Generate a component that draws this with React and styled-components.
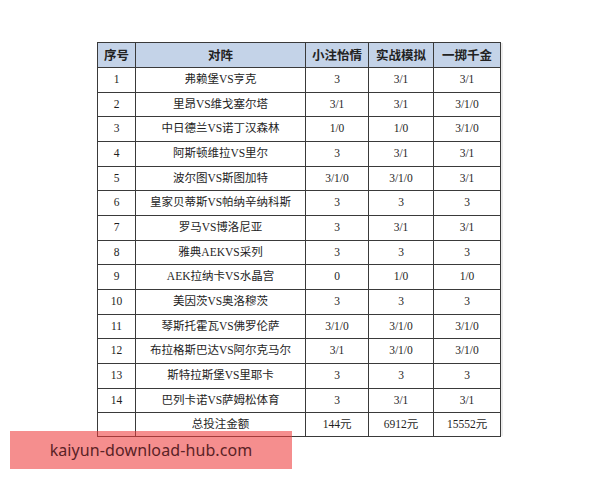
import React from "react";
import styled, { createGlobalStyle } from "styled-components";

const Global = createGlobalStyle`
  html, body { margin: 0; padding: 0; background: #ffffff; }
  body { font-family: "Liberation Serif", "Noto Sans CJK SC", serif; }
`;

const Page = styled.div`
  position: relative;
  width: 600px;
  height: 480px;
  padding: 42px 0 0 97px;
  box-sizing: border-box;
  background: #fff;
`;

const Table = styled.table`
  border-collapse: collapse;
  table-layout: fixed;
  width: 403px;
  color: #1e1e1e;
  font-family: "Liberation Serif", "Noto Sans CJK SC", serif;
  box-shadow: 3px 0 0 -1px #ececec;
`;

const Col = styled.col`
  width: ${(p) => p.$w}px;
`;

const HeadRow = styled.tr`
  height: 25px;
  background: #c4d3e8;
`;

const HeadCell = styled.th`
  border: 1px solid #3a3a3a;
  padding: 0;
  font-family: "Noto Sans CJK SC", sans-serif;
  font-weight: 700;
  font-size: 12.5px;
  color: #222;
  text-align: center;
  vertical-align: middle;
  line-height: 1;
`;

const Row = styled.tr`
  height: ${(p) => p.$h}px;
`;

const Cell = styled.td`
  border: 1px solid #3a3a3a;
  padding: 0;
  font-size: 11.5px;
  text-align: center;
  vertical-align: middle;
  line-height: 1;
  white-space: nowrap;
`;

const Banner = styled.div`
  position: absolute;
  left: 10px;
  top: 431px;
  width: 282px;
  height: 38px;
  background: rgba(238, 60, 60, 0.58);
  display: flex;
  align-items: center;
  justify-content: center;
  font-family: "Noto Sans", "Open Sans", sans-serif;
  font-size: 16px;
  color: #5a2226;
  letter-spacing: 0.1px;
`;

const rows = [
  ["1", "弗赖堡VS亨克", "3", "3/1", "3/1"],
  ["2", "里昂VS维戈塞尔塔", "3/1", "3/1", "3/1/0"],
  ["3", "中日德兰VS诺丁汉森林", "1/0", "1/0", "3/1/0"],
  ["4", "阿斯顿维拉VS里尔", "3", "3/1", "3/1"],
  ["5", "波尔图VS斯图加特", "3/1/0", "3/1/0", "3/1"],
  ["6", "皇家贝蒂斯VS帕纳辛纳科斯", "3", "3", "3"],
  ["7", "罗马VS博洛尼亚", "3", "3/1", "3/1"],
  ["8", "雅典AEKVS采列", "3", "3", "3"],
  ["9", "AEK拉纳卡VS水晶宫", "0", "1/0", "1/0"],
  ["10", "美因茨VS奥洛穆茨", "3", "3", "3"],
  ["11", "琴斯托霍瓦VS佛罗伦萨", "3/1/0", "3/1/0", "3/1/0"],
  ["12", "布拉格斯巴达VS阿尔克马尔", "3/1", "3/1/0", "3/1/0"],
  ["13", "斯特拉斯堡VS里耶卡", "3", "3", "3"],
  ["14", "巴列卡诺VS萨姆松体育", "3", "3/1", "3/1"],
  ["", "总投注金额", "144元", "6912元", "15552元"],
];

export default function App() {
  return (
    <>
      <Global />
      <Page>
        <Table>
          <colgroup>
            <Col $w={38} />
            <Col $w={170} />
            <Col $w={63} />
            <Col $w={65} />
            <Col $w={67} />
          </colgroup>
          <thead>
            <HeadRow>
              <HeadCell>序号</HeadCell>
              <HeadCell>对阵</HeadCell>
              <HeadCell>小注怡情</HeadCell>
              <HeadCell>实战模拟</HeadCell>
              <HeadCell>一掷千金</HeadCell>
            </HeadRow>
          </thead>
          <tbody>
            {rows.map((r, i) => (
              <Row key={i} $h={i === rows.length - 1 ? 24 : 24.67}>
                {r.map((c, j) => (
                  <Cell key={j}>{c}</Cell>
                ))}
              </Row>
            ))}
          </tbody>
        </Table>
        <Banner>kaiyun-download-hub.com</Banner>
      </Page>
    </>
  );
}
